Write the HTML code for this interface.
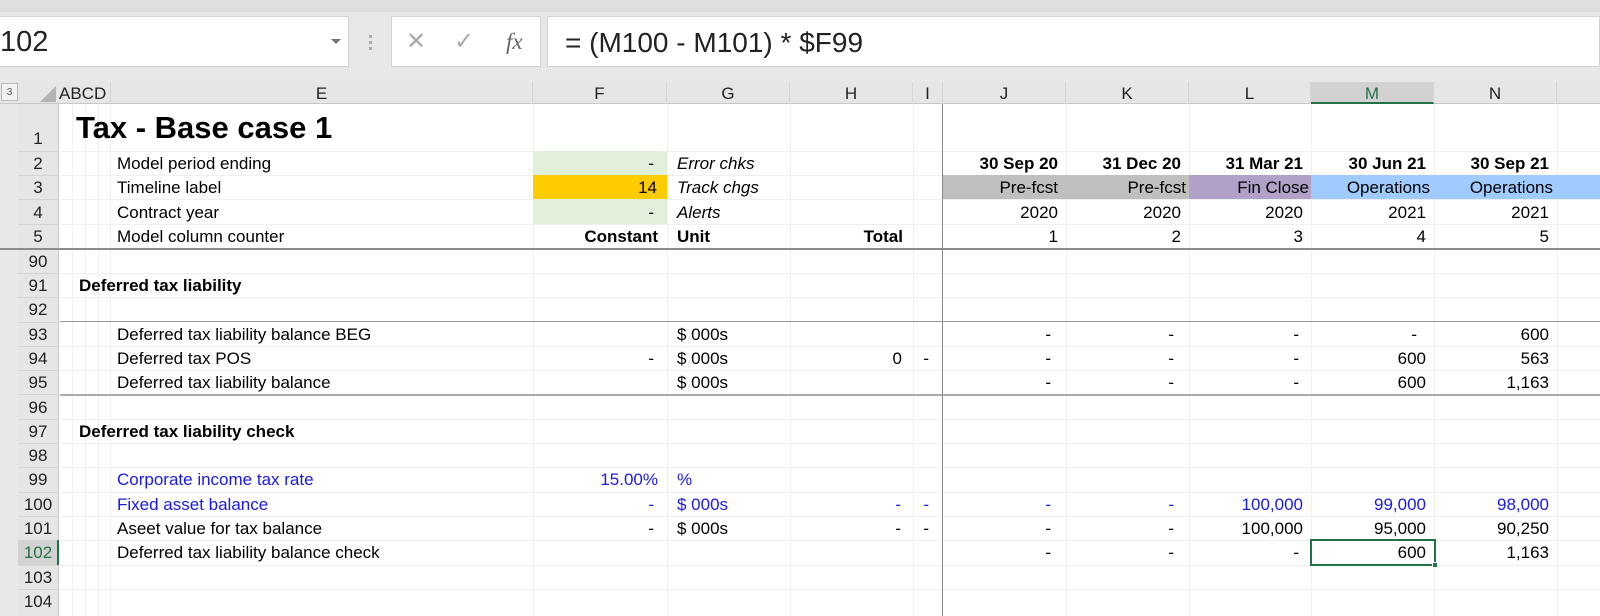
<!DOCTYPE html>
<html><head><meta charset="utf-8"><style>
body{margin:0;width:1600px;height:616px;overflow:hidden;background:#fff;font-family:"Liberation Sans",Arial,sans-serif;position:relative}
div{box-sizing:border-box}
.a{position:absolute}
.t{position:absolute;height:24px;line-height:25px;font-size:17px;white-space:nowrap;color:#000}
.b{font-weight:bold}
.i{font-style:italic}
.bl{color:#1a1ae6}
.hl{position:absolute;left:60px;right:0;height:1px;background:#efefef}
.vl{position:absolute;top:104px;bottom:0;width:1px;background:#f0f0f0}
.rh{position:absolute;left:18px;width:40px;text-align:center;font-size:17px;line-height:25px;height:24px;color:#222}
.ch{position:absolute;top:82px;height:22px;line-height:24px;font-size:17px;text-align:center;color:#222;border-right:1px solid #d6d6d6}
</style></head><body>
<div class="a" style="left:0;top:0;width:1600px;height:82px;background:#e8e8e8"></div>
<div class="a" style="left:0;top:0;width:1600px;height:12px;background:#dedede"></div>
<div class="a" style="left:0;top:16px;width:349px;height:51px;background:#fff;border:1px solid #d4d4d4;border-left:none"></div>
<div class="a" style="left:0;top:20px;font-size:29px;line-height:44px;color:#222">102</div>
<div class="a" style="left:331px;top:39px;width:0;height:0;border-left:5px solid transparent;border-right:5px solid transparent;border-top:5px solid #777"></div>
<div class="a" style="left:369px;top:35px;width:3px;height:3px;background:#aaa"></div>
<div class="a" style="left:369px;top:41px;width:3px;height:3px;background:#aaa"></div>
<div class="a" style="left:369px;top:47px;width:3px;height:3px;background:#aaa"></div>
<div class="a" style="left:391px;top:16px;width:150px;height:51px;background:#fff;border:1px solid #d4d4d4"></div>
<div class="a" style="left:406px;top:24px;font-size:24px;line-height:36px;color:#aaa">✕</div>
<div class="a" style="left:454px;top:24px;font-size:24px;line-height:36px;color:#aaa">✓</div>
<div class="a" style="left:506px;top:24px;font-size:23px;line-height:36px;color:#666;font-family:'Liberation Serif',serif;font-style:italic">fx</div>
<div class="a" style="left:547px;top:16px;width:1053px;height:51px;background:#fff;border:1px solid #d4d4d4"></div>
<div class="a" style="left:565px;top:21px;font-size:28px;line-height:44px;color:#222">= (M100 - M101) * $F99</div>
<div class="a" style="left:0;top:82px;width:1600px;height:22px;background:#e6e6e6;border-bottom:1px solid #c8c8c8"></div>
<div class="a" style="left:1px;top:83px;width:17px;height:18px;background:#f2f2f2;border:1px solid #bbb;font-size:10px;text-align:center;line-height:17px;color:#555">3</div>
<div class="a" style="left:40px;top:86px;width:0;height:0;border-left:16px solid transparent;border-bottom:16px solid #b4b4b4"></div>
<div class="a" style="left:59px;top:82px;font-size:17px;line-height:24px;color:#222">ABCD</div>
<div class="ch" style="left:110px;width:423px;border-left:1px solid #d6d6d6">E</div>
<div class="ch" style="left:533px;width:134px">F</div>
<div class="ch" style="left:667px;width:123px">G</div>
<div class="ch" style="left:790px;width:123px">H</div>
<div class="ch" style="left:913px;width:30px">I</div>
<div class="ch" style="left:943px;width:123px">J</div>
<div class="ch" style="left:1066px;width:123px">K</div>
<div class="ch" style="left:1189px;width:122px">L</div>
<div class="ch" style="left:1311px;width:123px;background:#d2d2d2;color:#217346;border-bottom:2px solid #217346">M</div>
<div class="ch" style="left:1434px;width:123px">N</div>
<div class="a" style="left:18px;top:104px;width:41px;height:512px;background:#e6e6e6;border-right:1px solid #c8c8c8"></div>
<div class="a" style="left:0;top:104px;width:18px;height:512px;background:#e8e8e8"></div>
<div class="a" style="left:18px;top:540px;width:41px;height:25px;background:#d2d2d2;border-right:2px solid #217346"></div>
<div class="vl" style="left:72px"></div><div class="vl" style="left:85px"></div><div class="vl" style="left:98px"></div><div class="vl" style="left:110px"></div>
<div class="vl" style="left:533px"></div><div class="vl" style="left:667px"></div><div class="vl" style="left:790px"></div><div class="vl" style="left:913px"></div>
<div class="vl" style="left:1066px"></div><div class="vl" style="left:1189px"></div><div class="vl" style="left:1311px"></div><div class="vl" style="left:1434px"></div><div class="vl" style="left:1557px"></div>
<div class="hl" style="top:151px"></div><div class="hl" style="top:175px"></div><div class="hl" style="top:199px"></div><div class="hl" style="top:224px"></div>
<div class="hl" style="top:273px"></div><div class="hl" style="top:297px"></div><div class="hl" style="top:346px"></div><div class="hl" style="top:370px"></div>
<div class="hl" style="top:419px"></div><div class="hl" style="top:443px"></div><div class="hl" style="top:467px"></div><div class="hl" style="top:492px"></div><div class="hl" style="top:516px"></div><div class="hl" style="top:540px"></div><div class="hl" style="top:565px"></div><div class="hl" style="top:589px"></div>
<div class="a" style="left:18px;top:151px;width:40px;height:1px;background:#d4d4d4"></div>
<div class="a" style="left:18px;top:175px;width:40px;height:1px;background:#d4d4d4"></div>
<div class="a" style="left:18px;top:199px;width:40px;height:1px;background:#d4d4d4"></div>
<div class="a" style="left:18px;top:224px;width:40px;height:1px;background:#d4d4d4"></div>
<div class="a" style="left:18px;top:273px;width:40px;height:1px;background:#d4d4d4"></div>
<div class="a" style="left:18px;top:297px;width:40px;height:1px;background:#d4d4d4"></div>
<div class="a" style="left:18px;top:322px;width:40px;height:1px;background:#d4d4d4"></div>
<div class="a" style="left:18px;top:346px;width:40px;height:1px;background:#d4d4d4"></div>
<div class="a" style="left:18px;top:370px;width:40px;height:1px;background:#d4d4d4"></div>
<div class="a" style="left:18px;top:394px;width:40px;height:1px;background:#d4d4d4"></div>
<div class="a" style="left:18px;top:419px;width:40px;height:1px;background:#d4d4d4"></div>
<div class="a" style="left:18px;top:443px;width:40px;height:1px;background:#d4d4d4"></div>
<div class="a" style="left:18px;top:467px;width:40px;height:1px;background:#d4d4d4"></div>
<div class="a" style="left:18px;top:492px;width:40px;height:1px;background:#d4d4d4"></div>
<div class="a" style="left:18px;top:516px;width:40px;height:1px;background:#d4d4d4"></div>
<div class="a" style="left:18px;top:565px;width:40px;height:1px;background:#d4d4d4"></div>
<div class="a" style="left:18px;top:589px;width:40px;height:1px;background:#d4d4d4"></div>
<div class="a" style="left:533px;top:151px;width:134px;height:24px;background:#e2efda"></div>
<div class="a" style="left:533px;top:175px;width:134px;height:24px;background:#ffcc00"></div>
<div class="a" style="left:533px;top:199px;width:134px;height:25px;background:#e2efda"></div>
<div class="a" style="left:943px;top:175px;width:246px;height:24px;background:#bfbfbf"></div>
<div class="a" style="left:1189px;top:175px;width:122px;height:24px;background:#b1a0c7"></div>
<div class="a" style="left:1311px;top:175px;width:289px;height:24px;background:#9fcbff"></div>
<div class="a" style="left:0;top:248px;width:1600px;height:2px;background:#8c8c8c"></div>
<div class="a" style="left:60px;top:321px;width:1540px;height:1px;background:#999"></div>
<div class="a" style="left:60px;top:394px;width:1540px;height:2px;background:#aaa"></div>
<div class="a" style="left:942px;top:104px;width:1px;height:512px;background:#888"></div>
<div class="rh" style="top:126px">1</div>
<div class="rh" style="top:151px">2</div>
<div class="rh" style="top:175px">3</div>
<div class="rh" style="top:200px">4</div>
<div class="rh" style="top:224px">5</div>
<div class="rh" style="top:249px">90</div>
<div class="rh" style="top:273px">91</div>
<div class="rh" style="top:297px">92</div>
<div class="rh" style="top:322px">93</div>
<div class="rh" style="top:346px">94</div>
<div class="rh" style="top:370px">95</div>
<div class="rh" style="top:395px">96</div>
<div class="rh" style="top:419px">97</div>
<div class="rh" style="top:443px">98</div>
<div class="rh" style="top:467px">99</div>
<div class="rh" style="top:492px">100</div>
<div class="rh" style="top:516px">101</div>
<div class="rh" style="top:540px;color:#217346">102</div>
<div class="rh" style="top:565px">103</div>
<div class="rh" style="top:589px">104</div>
<div class="a b" style="left:76px;top:106px;font-size:31px;line-height:44px">Tax - Base case 1</div>
<div class="t" style="left:117px;top:151px">Model period ending</div>
<div class="t" style="left:117px;top:175px">Timeline label</div>
<div class="t" style="left:117px;top:200px">Contract year</div>
<div class="t" style="left:117px;top:224px">Model column counter</div>
<div class="t" style="right:946px;top:151px">-</div>
<div class="t" style="right:943px;top:175px">14</div>
<div class="t" style="right:946px;top:200px">-</div>
<div class="t b" style="right:942px;top:224px">Constant</div>
<div class="t i" style="left:677px;top:151px">Error chks</div>
<div class="t i" style="left:677px;top:175px">Track chgs</div>
<div class="t i" style="left:677px;top:200px">Alerts</div>
<div class="t b" style="left:677px;top:224px">Unit</div>
<div class="t b" style="right:697px;top:224px">Total</div>
<div class="t b" style="right:542px;top:151px">30 Sep 20</div>
<div class="t b" style="right:419px;top:151px">31 Dec 20</div>
<div class="t b" style="right:297px;top:151px">31 Mar 21</div>
<div class="t b" style="right:174px;top:151px">30 Jun 21</div>
<div class="t b" style="right:51px;top:151px">30 Sep 21</div>
<div class="t" style="right:542px;top:175px">Pre-fcst</div>
<div class="t" style="right:414px;top:175px">Pre-fcst</div>
<div class="t" style="right:291px;top:175px">Fin Close</div>
<div class="t" style="right:170px;top:175px">Operations</div>
<div class="t" style="right:47px;top:175px">Operations</div>
<div class="t" style="right:542px;top:200px">2020</div>
<div class="t" style="right:419px;top:200px">2020</div>
<div class="t" style="right:297px;top:200px">2020</div>
<div class="t" style="right:174px;top:200px">2021</div>
<div class="t" style="right:51px;top:200px">2021</div>
<div class="t" style="right:542px;top:224px">1</div>
<div class="t" style="right:419px;top:224px">2</div>
<div class="t" style="right:297px;top:224px">3</div>
<div class="t" style="right:174px;top:224px">4</div>
<div class="t" style="right:51px;top:224px">5</div>
<div class="t b" style="left:79px;top:273px">Deferred tax liability</div>
<div class="t" style="left:117px;top:322px">Deferred tax liability balance BEG</div>
<div class="t" style="left:117px;top:346px">Deferred tax POS</div>
<div class="t" style="left:117px;top:370px">Deferred tax liability balance</div>
<div class="t" style="left:677px;top:322px">$ 000s</div>
<div class="t" style="left:677px;top:346px">$ 000s</div>
<div class="t" style="left:677px;top:370px">$ 000s</div>
<div class="t" style="right:946px;top:346px">-</div>
<div class="t" style="right:698px;top:346px">0</div>
<div class="t" style="right:671px;top:346px">-</div>
<div class="t" style="right:549px;top:322px">-</div><div class="t" style="right:426px;top:322px">-</div><div class="t" style="right:301px;top:322px">-</div><div class="t" style="right:183px;top:322px">-</div><div class="t" style="right:51px;top:322px">600</div>
<div class="t" style="right:549px;top:346px">-</div><div class="t" style="right:426px;top:346px">-</div><div class="t" style="right:301px;top:346px">-</div><div class="t" style="right:174px;top:346px">600</div><div class="t" style="right:51px;top:346px">563</div>
<div class="t" style="right:549px;top:370px">-</div><div class="t" style="right:426px;top:370px">-</div><div class="t" style="right:301px;top:370px">-</div><div class="t" style="right:174px;top:370px">600</div><div class="t" style="right:51px;top:370px">1,163</div>
<div class="t b" style="left:79px;top:419px">Deferred tax liability check</div>
<div class="t bl" style="left:117px;top:467px">Corporate income tax rate</div>
<div class="t bl" style="left:117px;top:492px">Fixed asset balance</div>
<div class="t" style="left:117px;top:516px">Aseet value for tax balance</div>
<div class="t" style="left:117px;top:540px">Deferred tax liability balance check</div>
<div class="t bl" style="right:942px;top:467px">15.00%</div>
<div class="t bl" style="left:677px;top:467px">%</div>
<div class="t bl" style="right:946px;top:492px">-</div>
<div class="t bl" style="left:677px;top:492px">$ 000s</div>
<div class="t bl" style="right:699px;top:492px">-</div>
<div class="t bl" style="right:671px;top:492px">-</div>
<div class="t" style="right:946px;top:516px">-</div>
<div class="t" style="left:677px;top:516px">$ 000s</div>
<div class="t" style="right:699px;top:516px">-</div>
<div class="t" style="right:671px;top:516px">-</div>
<div class="t bl" style="right:549px;top:492px">-</div><div class="t bl" style="right:426px;top:492px">-</div><div class="t bl" style="right:297px;top:492px">100,000</div><div class="t bl" style="right:174px;top:492px">99,000</div><div class="t bl" style="right:51px;top:492px">98,000</div>
<div class="t" style="right:549px;top:516px">-</div><div class="t" style="right:426px;top:516px">-</div><div class="t" style="right:297px;top:516px">100,000</div><div class="t" style="right:174px;top:516px">95,000</div><div class="t" style="right:51px;top:516px">90,250</div>
<div class="t" style="right:549px;top:540px">-</div><div class="t" style="right:426px;top:540px">-</div><div class="t" style="right:301px;top:540px">-</div><div class="t" style="right:174px;top:540px">600</div><div class="t" style="right:51px;top:540px">1,163</div>
<div class="a" style="left:1310px;top:539px;width:126px;height:27px;border:2px solid #217346"></div>
<div class="a" style="left:1432px;top:562px;width:6px;height:6px;background:#217346;border:1px solid #fff"></div>
</body></html>
